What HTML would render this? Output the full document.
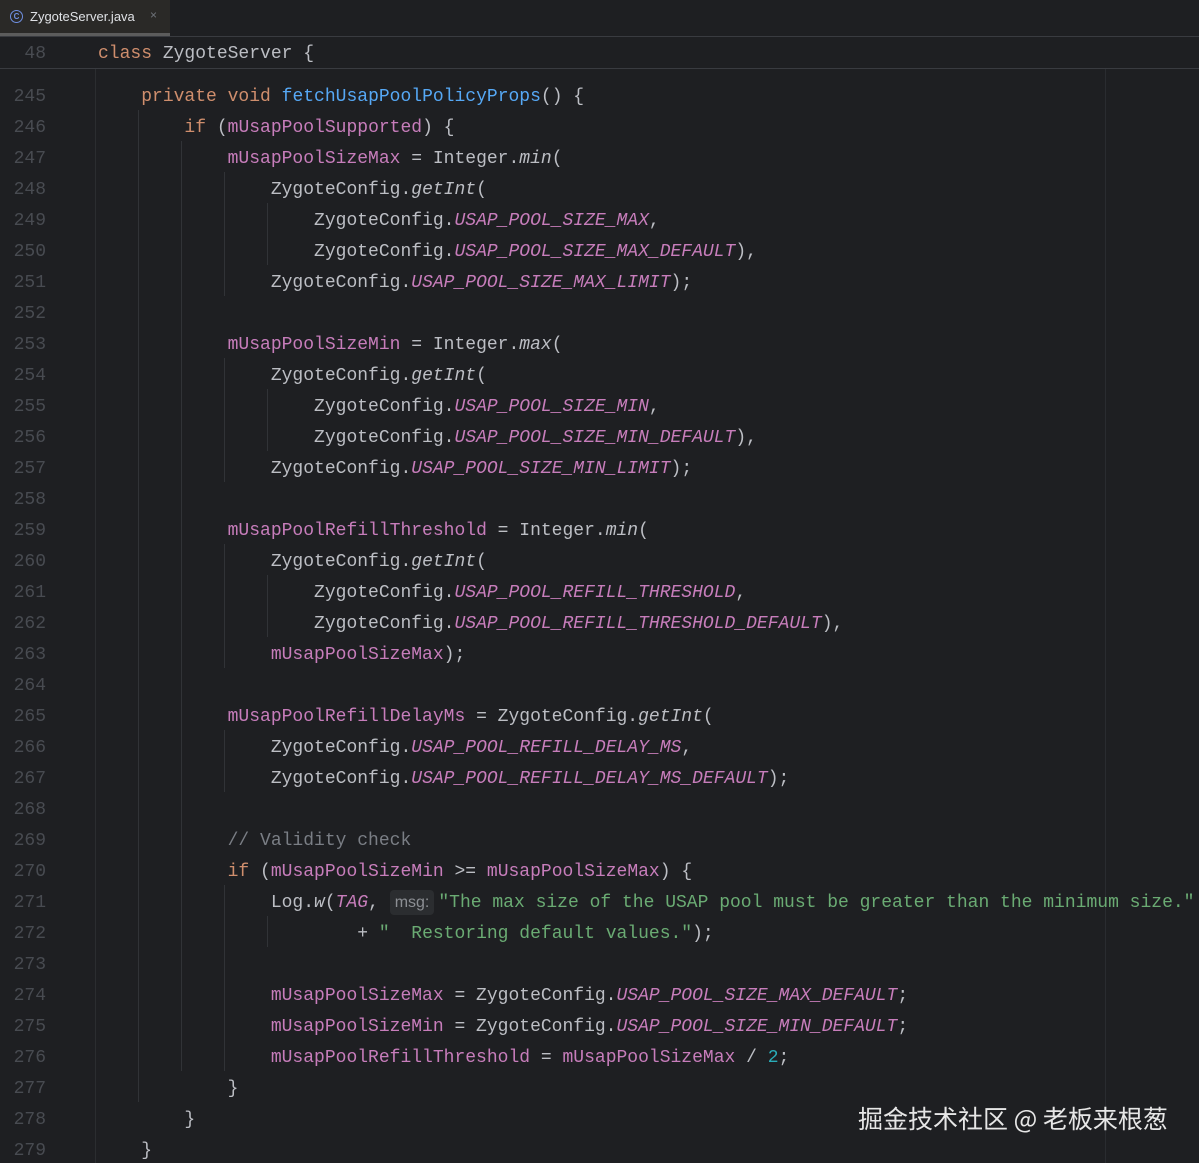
<!DOCTYPE html>
<html><head><meta charset="utf-8"><style>
html,body{margin:0;padding:0;background:#1e1f22;width:1199px;height:1163px;overflow:hidden;position:relative}
#tabbar{position:absolute;left:0;top:0;width:1199px;height:36px;background:#1e1f22;border-bottom:1px solid #393b40}
#tab{position:absolute;left:0;top:0;width:170px;height:33px;background:#2a2927;border-bottom:3px solid #5c5c5c;font:13px "Liberation Sans",sans-serif;color:#dfe1e5}
#tab .ic{position:absolute;left:10px;top:10px;width:11px;height:11px;border:1.3px solid #6f8fe0;border-radius:50%;font:bold 8px "Liberation Sans",sans-serif;color:#6f8fe0;text-align:center;line-height:11px}
#tab .t{position:absolute;left:30px;top:9px}
#tab .x{position:absolute;left:150px;top:8px;color:#6f737a;font-size:12px}
.row{position:absolute;left:0;height:31px;line-height:31px;font:18px "Liberation Mono",monospace;white-space:pre;color:#bcbec4;width:1199px}
.ln{position:absolute;left:0;top:7px;width:46px;text-align:right;color:#484b51}
.cd{position:absolute;left:98px;top:7px}
.k{color:#cf8e6d}.f{color:#c77dbb}.fi{color:#c77dbb;font-style:italic}.i{font-style:italic}.m{color:#56a8f5}.s{color:#6aab73}.c{color:#7a7e85}.n{color:#2aacb8}
.hint{background:#2b2d30;color:#8c8f94;font:16px "Liberation Sans",sans-serif;padding:4px 5px;border-radius:4px;margin-right:4px}
#sticky{position:absolute;left:0;top:37px;width:1199px;height:31px;background:#1e1f22;border-bottom:1px solid #393b40;z-index:2}
.g{position:absolute;width:1px;background:#313337}
#wm{position:absolute;left:858px;top:1100px;font:25px "Noto Sans CJK SC","WenQuanYi Zen Hei",sans-serif;color:#e6e6e6;white-space:nowrap}
</style></head><body>
<div id="tabbar"><div id="tab"><span class="ic">C</span><span class="t">ZygoteServer.java</span><span class="x">×</span></div></div>
<div class="g" style="left:95px;top:68px;height:1095px;background:#2b2d30"></div>
<div class="g" style="left:1105px;top:68px;height:1095px;background:#2a2c30"></div>
<div class="g" style="left:138px;top:110px;height:992px"></div>
<div class="g" style="left:181px;top:141px;height:930px"></div>
<div class="g" style="left:224px;top:172px;height:124px"></div>
<div class="g" style="left:224px;top:358px;height:124px"></div>
<div class="g" style="left:224px;top:544px;height:124px"></div>
<div class="g" style="left:224px;top:730px;height:62px"></div>
<div class="g" style="left:224px;top:885px;height:186px"></div>
<div class="g" style="left:267px;top:203px;height:62px"></div>
<div class="g" style="left:267px;top:389px;height:62px"></div>
<div class="g" style="left:267px;top:575px;height:62px"></div>
<div class="g" style="left:267px;top:916px;height:31px"></div>
<div id="sticky"><div class="row" style="top:0"><span class="ln">48</span><span class="cd"><span class="k">class</span> ZygoteServer {</span></div></div>
<div class="row" style="top:79.5px"><span class="ln">245</span><span class="cd">    <span class="k">private void</span> <span class="m">fetchUsapPoolPolicyProps</span>() {</span></div>
<div class="row" style="top:110.5px"><span class="ln">246</span><span class="cd">        <span class="k">if</span> (<span class="f">mUsapPoolSupported</span>) {</span></div>
<div class="row" style="top:141.5px"><span class="ln">247</span><span class="cd">            <span class="f">mUsapPoolSizeMax</span> = Integer.<span class="i">min</span>(</span></div>
<div class="row" style="top:172.5px"><span class="ln">248</span><span class="cd">                ZygoteConfig.<span class="i">getInt</span>(</span></div>
<div class="row" style="top:203.5px"><span class="ln">249</span><span class="cd">                    ZygoteConfig.<span class="fi">USAP_POOL_SIZE_MAX</span>,</span></div>
<div class="row" style="top:234.5px"><span class="ln">250</span><span class="cd">                    ZygoteConfig.<span class="fi">USAP_POOL_SIZE_MAX_DEFAULT</span>),</span></div>
<div class="row" style="top:265.5px"><span class="ln">251</span><span class="cd">                ZygoteConfig.<span class="fi">USAP_POOL_SIZE_MAX_LIMIT</span>);</span></div>
<div class="row" style="top:296.5px"><span class="ln">252</span></div>
<div class="row" style="top:327.5px"><span class="ln">253</span><span class="cd">            <span class="f">mUsapPoolSizeMin</span> = Integer.<span class="i">max</span>(</span></div>
<div class="row" style="top:358.5px"><span class="ln">254</span><span class="cd">                ZygoteConfig.<span class="i">getInt</span>(</span></div>
<div class="row" style="top:389.5px"><span class="ln">255</span><span class="cd">                    ZygoteConfig.<span class="fi">USAP_POOL_SIZE_MIN</span>,</span></div>
<div class="row" style="top:420.5px"><span class="ln">256</span><span class="cd">                    ZygoteConfig.<span class="fi">USAP_POOL_SIZE_MIN_DEFAULT</span>),</span></div>
<div class="row" style="top:451.5px"><span class="ln">257</span><span class="cd">                ZygoteConfig.<span class="fi">USAP_POOL_SIZE_MIN_LIMIT</span>);</span></div>
<div class="row" style="top:482.5px"><span class="ln">258</span></div>
<div class="row" style="top:513.5px"><span class="ln">259</span><span class="cd">            <span class="f">mUsapPoolRefillThreshold</span> = Integer.<span class="i">min</span>(</span></div>
<div class="row" style="top:544.5px"><span class="ln">260</span><span class="cd">                ZygoteConfig.<span class="i">getInt</span>(</span></div>
<div class="row" style="top:575.5px"><span class="ln">261</span><span class="cd">                    ZygoteConfig.<span class="fi">USAP_POOL_REFILL_THRESHOLD</span>,</span></div>
<div class="row" style="top:606.5px"><span class="ln">262</span><span class="cd">                    ZygoteConfig.<span class="fi">USAP_POOL_REFILL_THRESHOLD_DEFAULT</span>),</span></div>
<div class="row" style="top:637.5px"><span class="ln">263</span><span class="cd">                <span class="f">mUsapPoolSizeMax</span>);</span></div>
<div class="row" style="top:668.5px"><span class="ln">264</span></div>
<div class="row" style="top:699.5px"><span class="ln">265</span><span class="cd">            <span class="f">mUsapPoolRefillDelayMs</span> = ZygoteConfig.<span class="i">getInt</span>(</span></div>
<div class="row" style="top:730.5px"><span class="ln">266</span><span class="cd">                ZygoteConfig.<span class="fi">USAP_POOL_REFILL_DELAY_MS</span>,</span></div>
<div class="row" style="top:761.5px"><span class="ln">267</span><span class="cd">                ZygoteConfig.<span class="fi">USAP_POOL_REFILL_DELAY_MS_DEFAULT</span>);</span></div>
<div class="row" style="top:792.5px"><span class="ln">268</span></div>
<div class="row" style="top:823.5px"><span class="ln">269</span><span class="cd">            <span class="c">// Validity check</span></span></div>
<div class="row" style="top:854.5px"><span class="ln">270</span><span class="cd">            <span class="k">if</span> (<span class="f">mUsapPoolSizeMin</span> &gt;= <span class="f">mUsapPoolSizeMax</span>) {</span></div>
<div class="row" style="top:885.5px"><span class="ln">271</span><span class="cd">                Log.<span class="i">w</span>(<span class="fi">TAG</span>, <span class="hint">msg:</span><span class="s">"The max size of the USAP pool must be greater than the minimum size."</span></span></div>
<div class="row" style="top:916.5px"><span class="ln">272</span><span class="cd">                        + <span class="s">"  Restoring default values."</span>);</span></div>
<div class="row" style="top:947.5px"><span class="ln">273</span></div>
<div class="row" style="top:978.5px"><span class="ln">274</span><span class="cd">                <span class="f">mUsapPoolSizeMax</span> = ZygoteConfig.<span class="fi">USAP_POOL_SIZE_MAX_DEFAULT</span>;</span></div>
<div class="row" style="top:1009.5px"><span class="ln">275</span><span class="cd">                <span class="f">mUsapPoolSizeMin</span> = ZygoteConfig.<span class="fi">USAP_POOL_SIZE_MIN_DEFAULT</span>;</span></div>
<div class="row" style="top:1040.5px"><span class="ln">276</span><span class="cd">                <span class="f">mUsapPoolRefillThreshold</span> = <span class="f">mUsapPoolSizeMax</span> / <span class="n">2</span>;</span></div>
<div class="row" style="top:1071.5px"><span class="ln">277</span><span class="cd">            }</span></div>
<div class="row" style="top:1102.5px"><span class="ln">278</span><span class="cd">        }</span></div>
<div class="row" style="top:1133.5px"><span class="ln">279</span><span class="cd">    }</span></div>
<div id="wm">掘金技术社区 @ 老板来根葱</div>
</body></html>
